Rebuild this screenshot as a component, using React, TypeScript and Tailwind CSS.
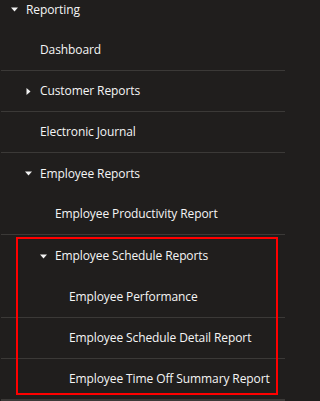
import React from "react";

type Node = {
  label: string;
  level: 0 | 1 | 2 | 3;
  state: "open" | "closed" | "leaf";
  children?: Node[];
  highlight?: boolean;
  tall?: boolean;
};

const tree: Node = {
  label: "Reporting",
  level: 0,
  state: "open",
  children: [
    { label: "Dashboard", level: 1, state: "leaf" },
    { label: "Customer Reports", level: 1, state: "closed" },
    { label: "Electronic Journal", level: 1, state: "leaf" },
    {
      label: "Employee Reports",
      level: 1,
      state: "open",
      children: [
        { label: "Employee Productivity Report", level: 2, state: "leaf" },
        {
          label: "Employee Schedule Reports",
          level: 2,
          state: "open",
          highlight: true,
          tall: true,
          children: [
            { label: "Employee Performance", level: 3, state: "leaf" },
            { label: "Employee Schedule Detail Report", level: 3, state: "leaf" },
            { label: "Employee Time Off Summary Report", level: 3, state: "leaf" },
          ],
        },
      ],
    },
  ],
};

const padByLevel = ["pl-[10px]", "pl-[24px]", "pl-[39px]", "pl-[53px]"];

function Caret({ state }: { state: Node["state"] }) {
  if (state === "open") {
    return (
      <svg width="7" height="5" viewBox="0 0 7 5" className="block">
        <polygon points="0,0.5 7,0.5 3.5,4.5" fill="#f2f2f2" />
      </svg>
    );
  }
  if (state === "closed") {
    return (
      <svg width="5" height="7" viewBox="0 0 5 7" className="block">
        <polygon points="0.5,0 4.5,3.5 0.5,7" fill="#f2f2f2" />
      </svg>
    );
  }
  return null;
}

function Row({ node }: { node: Node }) {
  const isLeafish = node.state !== "open";
  const h = isLeafish ? "h-[41px] border-b border-[#3b3937]" : node.tall ? "h-[42px]" : "h-[41px]";
  return (
    <div className={`ml-px flex items-center ${h} ${padByLevel[node.level]}`}>
      <span className={`flex w-[15px] shrink-0 items-center ${node.state === "closed" ? "pl-[1px]" : ""}`}>
        <Caret state={node.state} />
      </span>
      <span className="whitespace-nowrap text-[12px] leading-none tracking-[-0.1px] text-[#f5f5f5]">
        {node.label}
      </span>
    </div>
  );
}

function Item({ node }: { node: Node }) {
  if (node.state !== "open") {
    return (
      <li>
        <Row node={node} />
      </li>
    );
  }
  return (
    <li className={`ml-px border-b border-[#3b3937] ${node.highlight ? "relative" : ""}`}>
      <div className="-ml-px">
        <Row node={node} />
        <ul>
          {node.children?.map((c) => (
            <Item key={c.label} node={c} />
          ))}
        </ul>
      </div>
      {node.highlight && (
        <div className="pointer-events-none absolute left-[15px] right-[7px] top-[2px] bottom-[5px] border-[2px] border-[#ff0000]" />
      )}
    </li>
  );
}

export default function App() {
  return (
    <div
      className="h-[401px] w-full min-w-[285px] overflow-hidden bg-[#201e1d] antialiased"
      style={{ fontFamily: '"Open Sans", "Noto Sans", sans-serif' }}
    >
      <div className="w-[285px]">
        <ul className="-mt-[11px]">
          <Item node={tree} />
        </ul>
      </div>
    </div>
  );
}
